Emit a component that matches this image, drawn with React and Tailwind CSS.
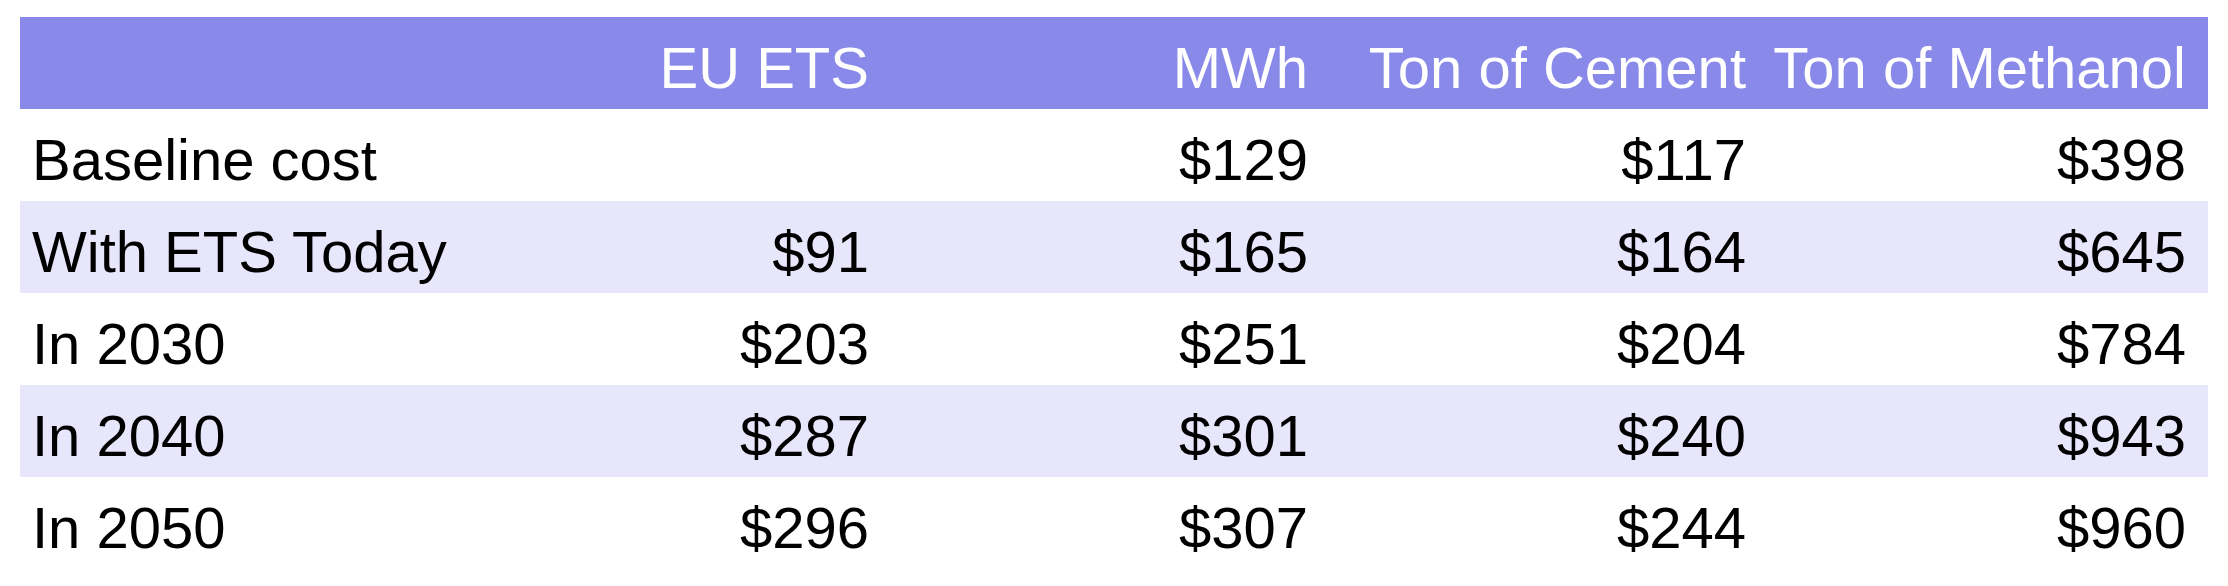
import React from "react";

const headers = ["", "EU ETS", "MWh", "Ton of Cement", "Ton of Methanol"];

const rows = [
  ["Baseline cost", "", "$129", "$117", "$398"],
  ["With ETS Today", "$91", "$165", "$164", "$645"],
  ["In 2030", "$203", "$251", "$204", "$784"],
  ["In 2040", "$287", "$301", "$240", "$943"],
  ["In 2050", "$296", "$307", "$244", "$960"],
];

const cols = "grid grid-cols-[428px_439px_439px_438px_440px]";

function Cell({ text, first }) {
  return (
    <div
      className={`h-[92px] pt-[10px] leading-[82px] whitespace-nowrap ${
        first ? "pl-[12px] text-left" : "pr-[18px] text-right"
      }`}
    >
      {text}
    </div>
  );
}

export default function App() {
  return (
    <div
      className="w-[2228px] h-[586px] bg-white pt-[17px] px-[20px] text-[58px] text-black"
      style={{ fontFamily: '"Liberation Sans", Arial, sans-serif' }}
    >
      <div className={`${cols} bg-[#8989e9] text-white`}>
        {headers.map((h, i) => (
          <Cell key={i} text={h} first={i === 0} />
        ))}
      </div>
      {rows.map((r, ri) => (
        <div
          key={ri}
          className={`${cols} ${ri % 2 === 1 ? "bg-[#e7e6fa]" : "bg-white"}`}
        >
          {r.map((c, ci) => (
            <Cell key={ci} text={c} first={ci === 0} />
          ))}
        </div>
      ))}
    </div>
  );
}
